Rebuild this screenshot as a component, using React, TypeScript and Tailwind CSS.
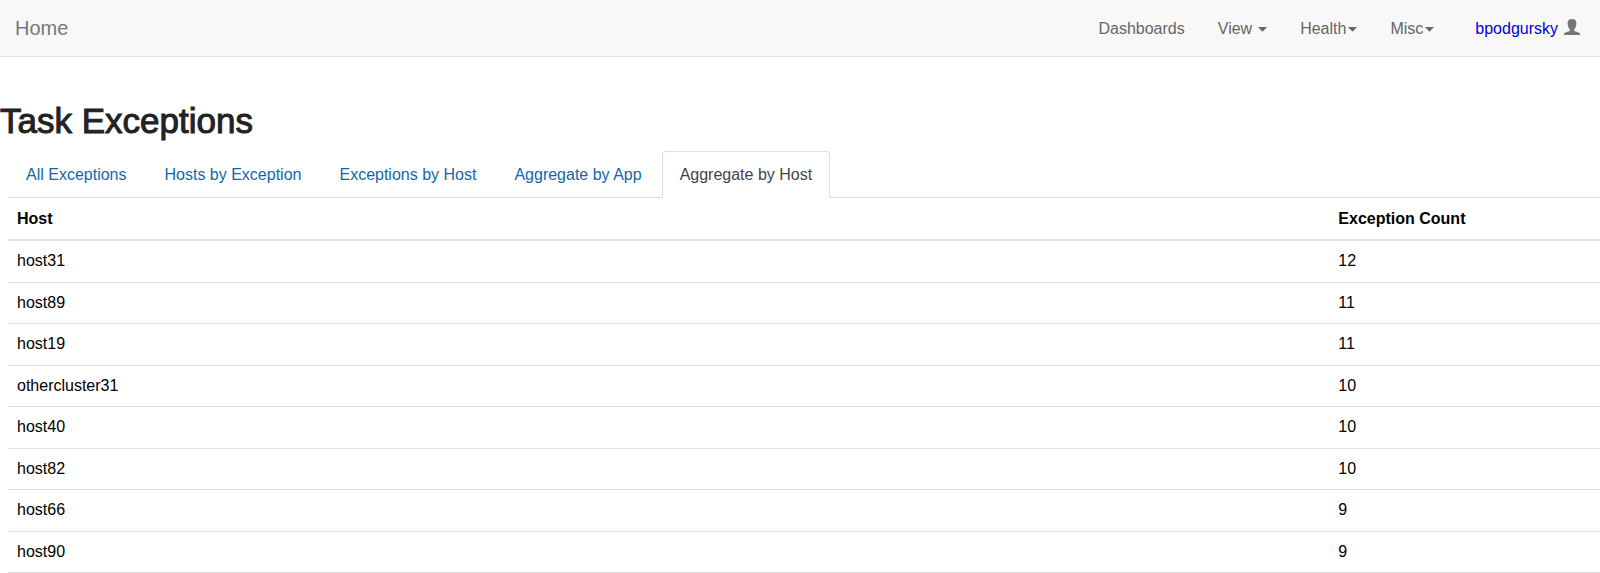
import React from "react";

const tabs = [
  "All Exceptions",
  "Hosts by Exception",
  "Exceptions by Host",
  "Aggregate by App",
  "Aggregate by Host",
];

const rows: [string, number][] = [
  ["host31", 12],
  ["host89", 11],
  ["host19", 11],
  ["othercluster31", 10],
  ["host40", 10],
  ["host82", 10],
  ["host66", 9],
  ["host90", 9],
];

function Caret() {
  return (
    <svg className="mt-px h-[5px] w-[9px] shrink-0" viewBox="0 0 9 5" fill="currentColor" aria-hidden="true">
      <path d="M0 0h9L4.500 4.800z" />
    </svg>
  );
}

function UserIcon() {
  return (
    <svg className="h-[16px] w-[16px] shrink-0 text-[#777]" viewBox="0 0 16 16" fill="currentColor" aria-hidden="true">
      <path d="M8 0C5.200 0 3.600 1.500 3.600 3.900c0 2.600.8 5 2.300 6.300v1c0 .5-.3.800-.8 1L1.500 13.600C.6 14 0 14.700 0 15.500v.5h16v-.5c0-.8-.6-1.500-1.500-1.900l-3.600-1.400c-.5-.2-.8-.5-.8-1v-1c1.500-1.300 2.300-3.700 2.300-6.300C12.400 1.500 10.800 0 8 0z" />
    </svg>
  );
}

export default function App() {
  const [active, setActive] = React.useState(4);
  return (
    <div className="overflow-x-hidden bg-white font-['Liberation_Sans',Arial,sans-serif] text-base text-black">
      <nav className="flex h-[57px] items-center justify-between border-b border-[#e2e2e2] bg-[#f8f8f8] pr-5 pl-[15px] text-[#666]">
        <a href="#" className="text-xl text-[#777]">Home</a>
        <div className="flex items-center gap-[33px] pt-px">
          <a href="#">Dashboards</a>
          <button type="button" className="flex items-center gap-[6px]">View<Caret /></button>
          <button type="button" className="flex items-center gap-[2px]">Health<Caret /></button>
          <button type="button" className="flex items-center gap-[2px]">Misc<Caret /></button>
          <a href="#" className="ml-[8px] flex items-center gap-[6px] text-[#0000dd]">
            bpodgursky
            <span className="pb-1"><UserIcon /></span>
          </a>
        </div>
      </nav>
      <main>
        <h1 className="pt-[44px] text-[35px] leading-[40px] text-[#222] [-webkit-text-stroke:1px_#222]">Task Exceptions</h1>
        <div className="pt-[10px] pl-2">
          <div role="tablist" className="flex gap-[2px] border-b border-[#ddd]">
            {tabs.map((tab, i) => (
              <button
                key={tab}
                type="button"
                role="tab"
                aria-selected={i === active}
                onClick={() => setActive(i)}
                className={
                  i === active
                    ? "-mb-px h-[47px] rounded-t-[4px] border border-[#ddd] border-b-white bg-white px-[17px] text-[#444]"
                    : "-mb-px h-[47px] border border-transparent px-[17px] text-[#1566a8]"
                }
              >
                {tab}
              </button>
            ))}
          </div>
          <table className="w-full border-collapse text-left">
            <thead>
              <tr className="h-[42px] border-b-2 border-[#ddd]">
                <th className="w-[83%] px-[9px]">Host</th>
                <th className="px-[9px]">Exception Count</th>
              </tr>
            </thead>
            <tbody>
              {rows.map(([host, count]) => (
                <tr key={host} className="border-b border-[#ddd] odd:h-[42px] even:h-[41px]">
                  <td className="px-[9px]">{host}</td>
                  <td className="px-[9px]">{count}</td>
                </tr>
              ))}
            </tbody>
          </table>
        </div>
      </main>
    </div>
  );
}
